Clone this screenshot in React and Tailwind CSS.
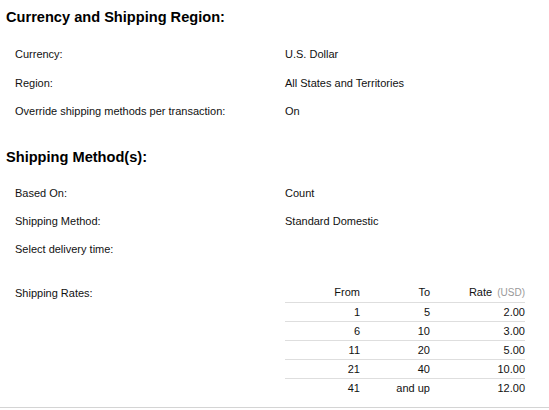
const regionRows = [
  ["Currency:", "U.S. Dollar"],
  ["Region:", "All States and Territories"],
  ["Override shipping methods per transaction:", "On"],
];

const methodRows = [
  ["Based On:", "Count"],
  ["Shipping Method:", "Standard Domestic"],
  ["Select delivery time:", ""],
];

const rates = [
  ["1", "5", "2.00"],
  ["6", "10", "3.00"],
  ["11", "20", "5.00"],
  ["21", "40", "10.00"],
  ["41", "and up", "12.00"],
];

const Row = ({ label, value }) => (
  <div className="flex h-[28px] items-center">
    <div className="w-[285px] pl-[15px]">{label}</div>
    <div>{value}</div>
  </div>
);

export default function App() {
  return (
    <main
      className="w-[549px] h-[410px] bg-white text-[11px] text-[#111]"
      style={{ fontFamily: '"Liberation Sans", Arial, sans-serif' }}
    >
      <div className="h-[408px] border-b border-[#d4d4d4]">
        {/* Region */}
        <h2 className="pl-[6px] pt-[8px] text-[14.6px] leading-[18px] font-bold text-black">
          Currency and Shipping Region:
        </h2>
        <div className="mt-[14px]">
          <Row label={regionRows[0][0]} value={regionRows[0][1]} />
          <div className="mt-[1px]" />
          <Row label={regionRows[1][0]} value={regionRows[1][1]} />
          <Row label={regionRows[2][0]} value={regionRows[2][1]} />
        </div>

        {/* Methods */}
        <h2 className="mt-[23px] pl-[6px] text-[14.6px] leading-[18px] font-bold text-black">
          Shipping Method(s):
        </h2>
        <div className="mt-[13px]">
          {methodRows.map(([l, v]) => (
            <Row key={l} label={l} value={v} />
          ))}
        </div>

        {/* Rates */}
        <div className="mt-[20px] flex">
          <div className="w-[285px] pl-[15px] h-[20px] flex items-center">Shipping Rates:</div>
          <div className="w-[240px]">
            <div className="flex h-[20px] items-center border-b border-[#dedede]">
              <div className="w-[75px] text-right">From</div>
              <div className="w-[70px] text-right">To</div>
              <div className="w-[95px] text-right">
                Rate <span className="ml-[2px] text-[10px] text-[#999]">(USD)</span>
              </div>
            </div>
            {rates.map(([f, t, r], i) => (
              <div
                key={f}
                className={`flex h-[19px] items-center ${i < rates.length - 1 ? "border-b border-[#dedede]" : ""}`}
              >
                <div className="w-[75px] text-right">{f}</div>
                <div className="w-[70px] text-right">{t}</div>
                <div className="w-[95px] text-right">{r}</div>
              </div>
            ))}
          </div>
        </div>
      </div>
    </main>
  );
}
